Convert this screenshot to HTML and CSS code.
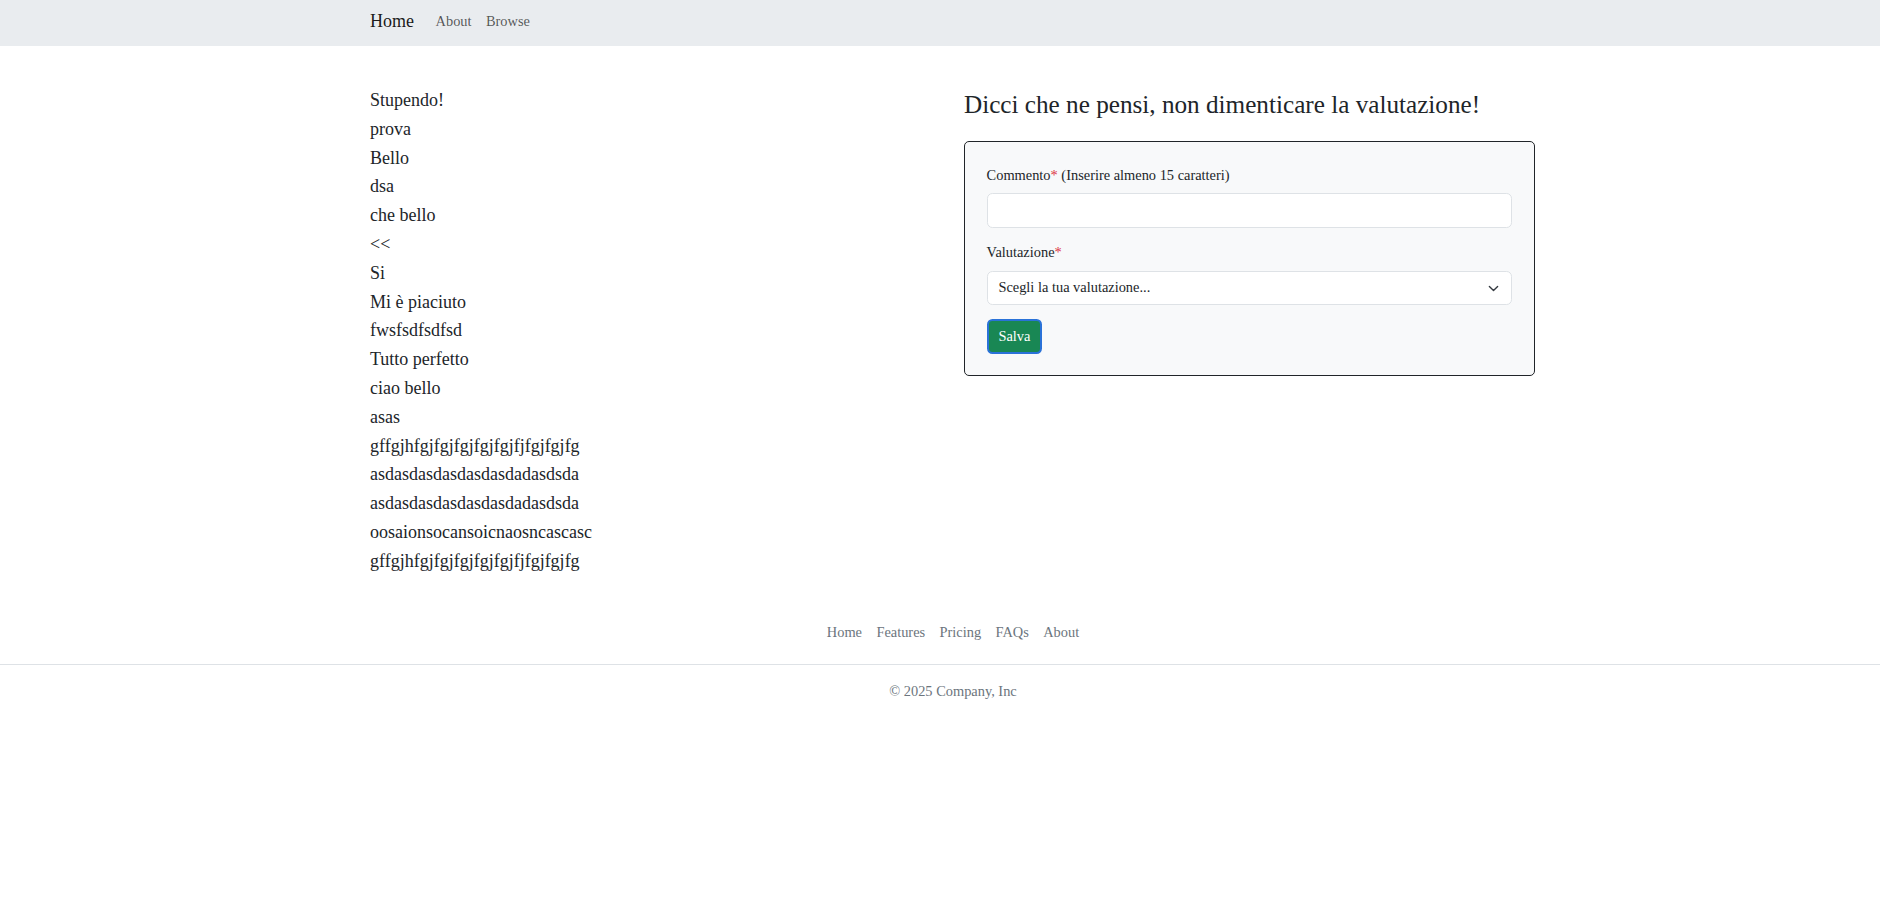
FILE: index.html
```html
<!DOCTYPE html>
<html lang="it">
<head>
<meta charset="utf-8">
<title>Recensioni</title>
<link rel="stylesheet" href="styles.css">
</head>
<body>
<nav class="navbar">
  <div class="nav-inner">
    <a class="brand" href="#">Home</a>
    <a class="nav-link" href="#">About</a>
    <a class="nav-link" href="#">Browse</a>
  </div>
</nav>

<main class="main">
  <div class="reviews">
    <div class="review">Stupendo!</div>
    <div class="review">prova</div>
    <div class="review">Bello</div>
    <div class="review">dsa</div>
    <div class="review">che bello</div>
    <div class="review">&lt;&lt;</div>
    <div class="review">Si</div>
    <div class="review">Mi è piaciuto</div>
    <div class="review">fwsfsdfsdfsd</div>
    <div class="review">Tutto perfetto</div>
    <div class="review">ciao bello</div>
    <div class="review">asas</div>
    <div class="review">gffgjhfgjfgjfgjfgjfgjfjfgjfgjfg</div>
    <div class="review">asdasdasdasdasdasdadasdsda</div>
    <div class="review">asdasdasdasdasdasdadasdsda</div>
    <div class="review">oosaionsocansoicnaosncascasc</div>
    <div class="review">gffgjhfgjfgjfgjfgjfgjfjfgjfgjfg</div>
  </div>

  <div class="form-col">
    <h3 class="form-title">Dicci che ne pensi, non dimenticare la valutazione!</h3>
    <form class="review-form">
      <div class="field">
        <label class="label" for="commento">Commento<span class="req">*</span> (Inserire almeno 15 caratteri)</label>
        <input class="control" id="commento" type="text">
      </div>
      <div class="field">
        <label class="label" for="valutazione">Valutazione<span class="req">*</span></label>
        <div class="select-wrap">
          <select class="control select" id="valutazione">
            <option>Scegli la tua valutazione...</option>
            <option>1</option>
            <option>2</option>
            <option>3</option>
            <option>4</option>
            <option>5</option>
          </select>
          <svg class="chevron" width="15" height="11" viewBox="0 0 16 16" aria-hidden="true">
            <path d="M2 5l6 6 6-6" fill="none" stroke="#343a40" stroke-width="2" stroke-linecap="round" stroke-linejoin="round"/>
          </svg>
        </div>
      </div>
      <button class="btn" type="button">Salva</button>
    </form>
  </div>
</main>

<footer class="footer">
  <ul class="footer-nav">
    <li><a href="#">Home</a></li>
    <li><a href="#">Features</a></li>
    <li><a href="#">Pricing</a></li>
    <li><a href="#">FAQs</a></li>
    <li><a href="#">About</a></li>
  </ul>
  <p class="copy">© 2025 Company, Inc</p>
</footer>
</body>
</html>
```

FILE: styles.css
```css
* { box-sizing: border-box; }

body {
  margin: 0;
  font-family: "Liberation Serif", "Times New Roman", serif;
  font-size: 14.4px;
  line-height: 1.5;
  color: #212529;
  background: #fff;
}

a { text-decoration: none; }

.navbar {
  height: 46px;
  background: #e9ecef;
}

.nav-inner {
  height: 43px;
  display: flex;
  align-items: center;
  padding-left: 370px;
}

.brand {
  font-size: 18px;
  line-height: 27px;
  padding: 5.6px 0;
  margin-right: 14.4px;
  color: rgba(0, 0, 0, 0.9);
}

.nav-link {
  font-size: 14.4px;
  line-height: 21.6px;
  padding: 7.2px;
  color: rgba(0, 0, 0, 0.65);
}

.main {
  display: grid;
  grid-template-columns: 594px 571px;
  margin-left: 370px;
  padding-top: 40px;
  padding-bottom: 2px;
}

.reviews {
  display: flex;
  flex-direction: column;
}

.review {
  font-size: 18px;
  line-height: 28.8px;
  height: 28.8px;
}

.form-title {
  font-size: 25.2px;
  font-weight: 500;
  line-height: 1.2;
  margin: 4px 0 20.8px;
}

.review-form {
  background: #f8f9fa;
  border: 1px solid #212529;
  border-radius: 5px;
  padding: 22.6px 21.6px 21.6px;
  display: flex;
  flex-direction: column;
  gap: 14.4px;
  align-items: flex-start;
}

.field {
  width: 100%;
  display: flex;
  flex-direction: column;
}

.label {
  font-size: 14.4px;
  line-height: 21.6px;
  margin-bottom: 7.2px;
}

.req { color: #dc3545; }

.control {
  display: block;
  width: 100%;
  height: 34.2px;
  padding: 5.4px 10.8px;
  font-family: inherit;
  font-size: 14.4px;
  line-height: 21.6px;
  color: #212529;
  background: #fff;
  border: 1px solid #dee2e6;
  border-radius: 5.4px;
  outline: none;
}

.select-wrap { position: relative; }

.select {
  appearance: none;
  -webkit-appearance: none;
  padding-right: 40px;
}

.chevron {
  position: absolute;
  right: 11px;
  top: 12px;
  pointer-events: none;
}

.btn {
  height: 34.2px;
  padding: 4.4px 9.8px;
  font-family: inherit;
  font-size: 14.4px;
  line-height: 21.6px;
  color: #fff;
  background: #198754;
  border: 2px solid #2a72d8;
  border-radius: 5.4px;
}

.footer {
  margin-top: 21.6px;
  padding-top: 15.4px;
}

.footer-nav {
  list-style: none;
  margin: 0 0 16.4px;
  padding: 0 0 13.4px 26px;
  display: flex;
  justify-content: center;
  border-bottom: 1px solid #dee2e6;
}

.footer-nav a {
  display: block;
  padding: 7.2px;
  line-height: 21.6px;
  color: #6c757d;
}

.copy {
  margin: 0;
  padding-left: 26px;
  text-align: center;
  color: #6c757d;
}
```
